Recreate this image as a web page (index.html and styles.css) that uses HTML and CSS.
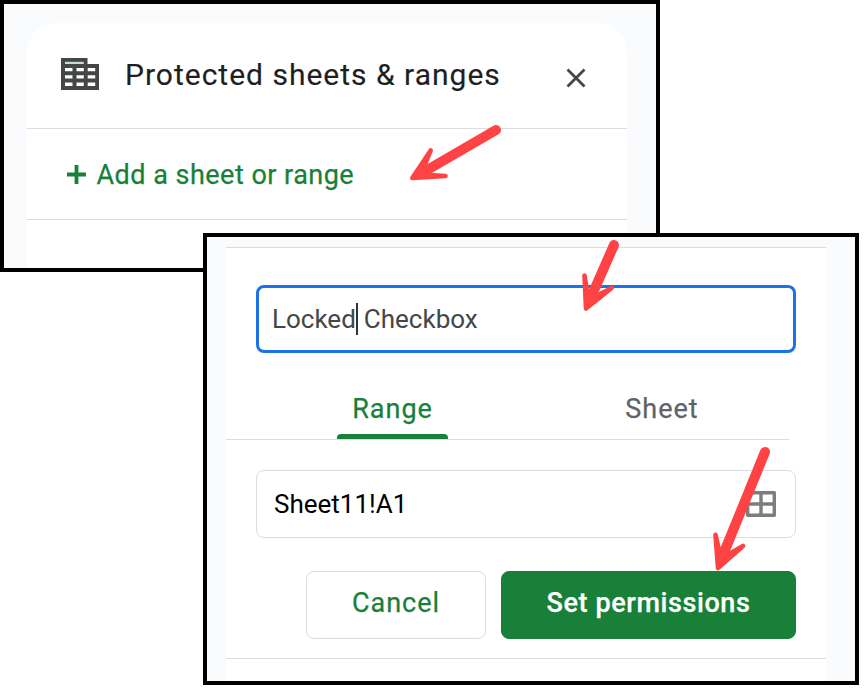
FILE: index.html
```
<!DOCTYPE html>
<html lang="en">
<head>
    <meta charset="UTF-8">
    <meta name="viewport" content="width=device-width, initial-scale=1.0">
    <title>Protected sheets &amp; ranges</title>
    <link rel="stylesheet" href="styles.css">
</head>
<body>
    <div class="window window-list">
        <div class="sidebar">
            <div class="header">
                <svg class="icon-sheets" width="38" height="32" viewBox="0 0 38 32">
                    <path fill="#444746" fill-rule="evenodd" d="M0 0h26.500v6H38v26H0zM4 10v3.300h7.500V10zM15.500 10v3.300h7.300V10zM26.700 10v3.300h7.500V10zM4 17.200v3.300h7.500v-3.300zM15.500 17.200v3.300h7.300v-3.300zM26.700 17.200v3.300h7.500v-3.300zM4 24.500v3.500h7.500v-3.500zM15.500 24.500v3.500h7.300v-3.500zM26.700 24.500v3.500h7.500v-3.500z"/>
                    <path fill="#c4dfcd" d="M4 3.800h18.800v2.200H4z"/>
                </svg>
                <h1>Protected sheets &amp; ranges</h1>
                <svg class="icon-close" width="20" height="20" viewBox="0 0 20 20">
                    <path d="M1.500 1.500l17 17M18.500 1.500l-17 17" stroke="#444746" stroke-width="2.800"/>
                </svg>
            </div>
            <div class="add-range">
                <svg width="19" height="19" viewBox="0 0 19 19">
                    <path d="M9.500 0v19M0 9.500h19" stroke="#188038" stroke-width="3.800"/>
                </svg>
                <span>Add a sheet or range</span>
            </div>
        </div>
    </div>

    <div class="window window-edit">
        <div class="sidebar">
            <div class="form">
                <div class="field description"><span>Locked</span><i class="caret"></i><span class="rest">Checkbox</span></div>
                <div class="tabs">
                    <div class="tab active"><span>Range</span></div>
                    <div class="tab"><span>Sheet</span></div>
                </div>
                <div class="field range">
                    <span>Sheet11!A1</span>
                    <svg width="30" height="26" viewBox="0 0 30 26">
                        <path fill="none" stroke="#7c7d7c" stroke-width="3.400" stroke-linejoin="round" d="M1.700 1.700h26.600v22.600H1.700zM15 1.700v22.600M1.700 13h26.600"/>
                    </svg>
                </div>
                <div class="buttons">
                    <button class="cancel">Cancel</button>
                    <button class="submit">Set permissions</button>
                </div>
            </div>
        </div>
    </div>

    <svg class="arrows" width="868" height="695" viewBox="0 0 868 695">
        <path class="shaft" d="M496 130L428 169.500M614 245L592 295M765 452L723 555"/>
        <path class="head" d="M412.300 178L430.700 150.500L424.800 165L430.500 175L445.500 176z"/>
        <path class="head" d="M586 308.500L584.500 275.500L587 291L597 295.500L611.700 288z"/>
        <path class="head" d="M718 568L715.500 534.700L719 550L729 554L743 546z"/>
    </svg>
</body>
</html>
```
FILE: styles.css
```
* {
    box-sizing: border-box;
    margin: 0;
    padding: 0;
}
body {
    width: 868px;
    height: 695px;
    overflow: hidden;
    background-color: #FFF;
    font-family: Roboto, "Liberation Sans", sans-serif;
}
.window {
    border: 4px solid #000;
    background-color: #F9FBFD;
    overflow: hidden;
}
.window-list {
    width: 660px;
    height: 272px;
    padding: 19px 29px 0 23px;
}
.window-edit {
    position: relative;
    width: 656px;
    height: 452px;
    margin: -39px 0 0 203px;
    padding: 0 29px 0 19px;
}
.sidebar {
    width: 600px;
    height: 100%;
    background-color: #FFF;
}
.window-list .sidebar {
    border-radius: 29px 29px 0 0;
}
.header {
    display: flex;
    align-items: center;
    height: 106px;
    padding: 0 41.5px 0 33.5px;
    border-bottom: 1px solid #DADCE0;
}
.icon-sheets {
    margin-bottom: 3px;
}
.icon-close {
    margin: 4px 0 0 auto;
}
h1 {
    margin: 0 0 1px 26.5px;
    font-size: 30px;
    font-weight: 400;
    line-height: 36px;
    letter-spacing: 1px;
    color: #1F1F1F;
    white-space: nowrap;
    -webkit-text-stroke: 0.15px;
}
.add-range {
    display: flex;
    align-items: center;
    height: 91px;
    padding-left: 39.5px;
    border-bottom: 1px solid #DADCE0;
    font-size: 27px;
    letter-spacing: 0.48px;
    color: #188038;
    -webkit-text-stroke: 0.25px;
}
.add-range span {
    margin: 2px 0 0 11px;
}
.form {
    height: 412px;
    margin-top: 10px;
    padding-top: 37px;
    border-top: 1px solid #DADCE0;
    border-bottom: 1px solid #DADCE0;
}
.field {
    display: flex;
    align-items: center;
    width: 540px;
    height: 68px;
    margin-left: 30px;
    border: 1px solid #DADCE0;
    border-radius: 8px;
    font-size: 26px;
}
.description {
    padding-left: 13px;
    border: 3px solid #1A73E8;
    color: #444746;
}
.caret {
    width: 2px;
    height: 32px;
    background-color: #333;
}
.rest {
    margin-left: 6px;
}
.tabs {
    display: flex;
    width: 563px;
    height: 87px;
    border-bottom: 1px solid #DADCE0;
    font-size: 27px;
    letter-spacing: 1px;
    -webkit-text-stroke: 0.25px;
}
.tab {
    display: flex;
    flex: none;
    flex-direction: column;
    justify-content: flex-end;
    align-items: center;
    width: 266px;
    color: #5F6368;
}
.tab:first-child {
    width: 273px;
    margin-left: 30px;
}
.tab span {
    line-height: 32px;
    padding-bottom: 14px;
}
.tab.active span {
    padding-bottom: 9px;
    color: #188038;
}
.tab.active::after {
    content: "";
    width: 111px;
    height: 5px;
    border-radius: 4px 4px 0 0;
    background-color: #188038;
}
.range {
    justify-content: space-between;
    margin-top: 30px;
    padding: 0 19px 0 17px;
    color: #000;
}
.buttons {
    display: flex;
    justify-content: flex-end;
    gap: 15px;
    margin-top: 33px;
    padding-right: 30px;
}
button {
    height: 68px;
    padding-bottom: 4px;
    border: 1px solid #DADCE0;
    border-radius: 8px;
    background-color: #FFF;
    font-family: inherit;
    font-size: 27px;
    letter-spacing: 1px;
    color: #188038;
    -webkit-text-stroke: 0.25px;
}
.cancel {
    width: 180px;
}
.submit {
    width: 295px;
    border-color: #188038;
    background-color: #188038;
    font-weight: 500;
    letter-spacing: 0.6px;
    color: #FFF;
}
/* arrows pointing at the steps */
.arrows {
    position: absolute;
    top: 0;
    left: 0;
}
.shaft {
    fill: none;
    stroke: #FF4345;
    stroke-width: 10;
    stroke-linecap: round;
}
.head {
    fill: #FF4345;
    stroke: #FF4345;
    stroke-width: 4.6;
    stroke-linejoin: round;
}
```
